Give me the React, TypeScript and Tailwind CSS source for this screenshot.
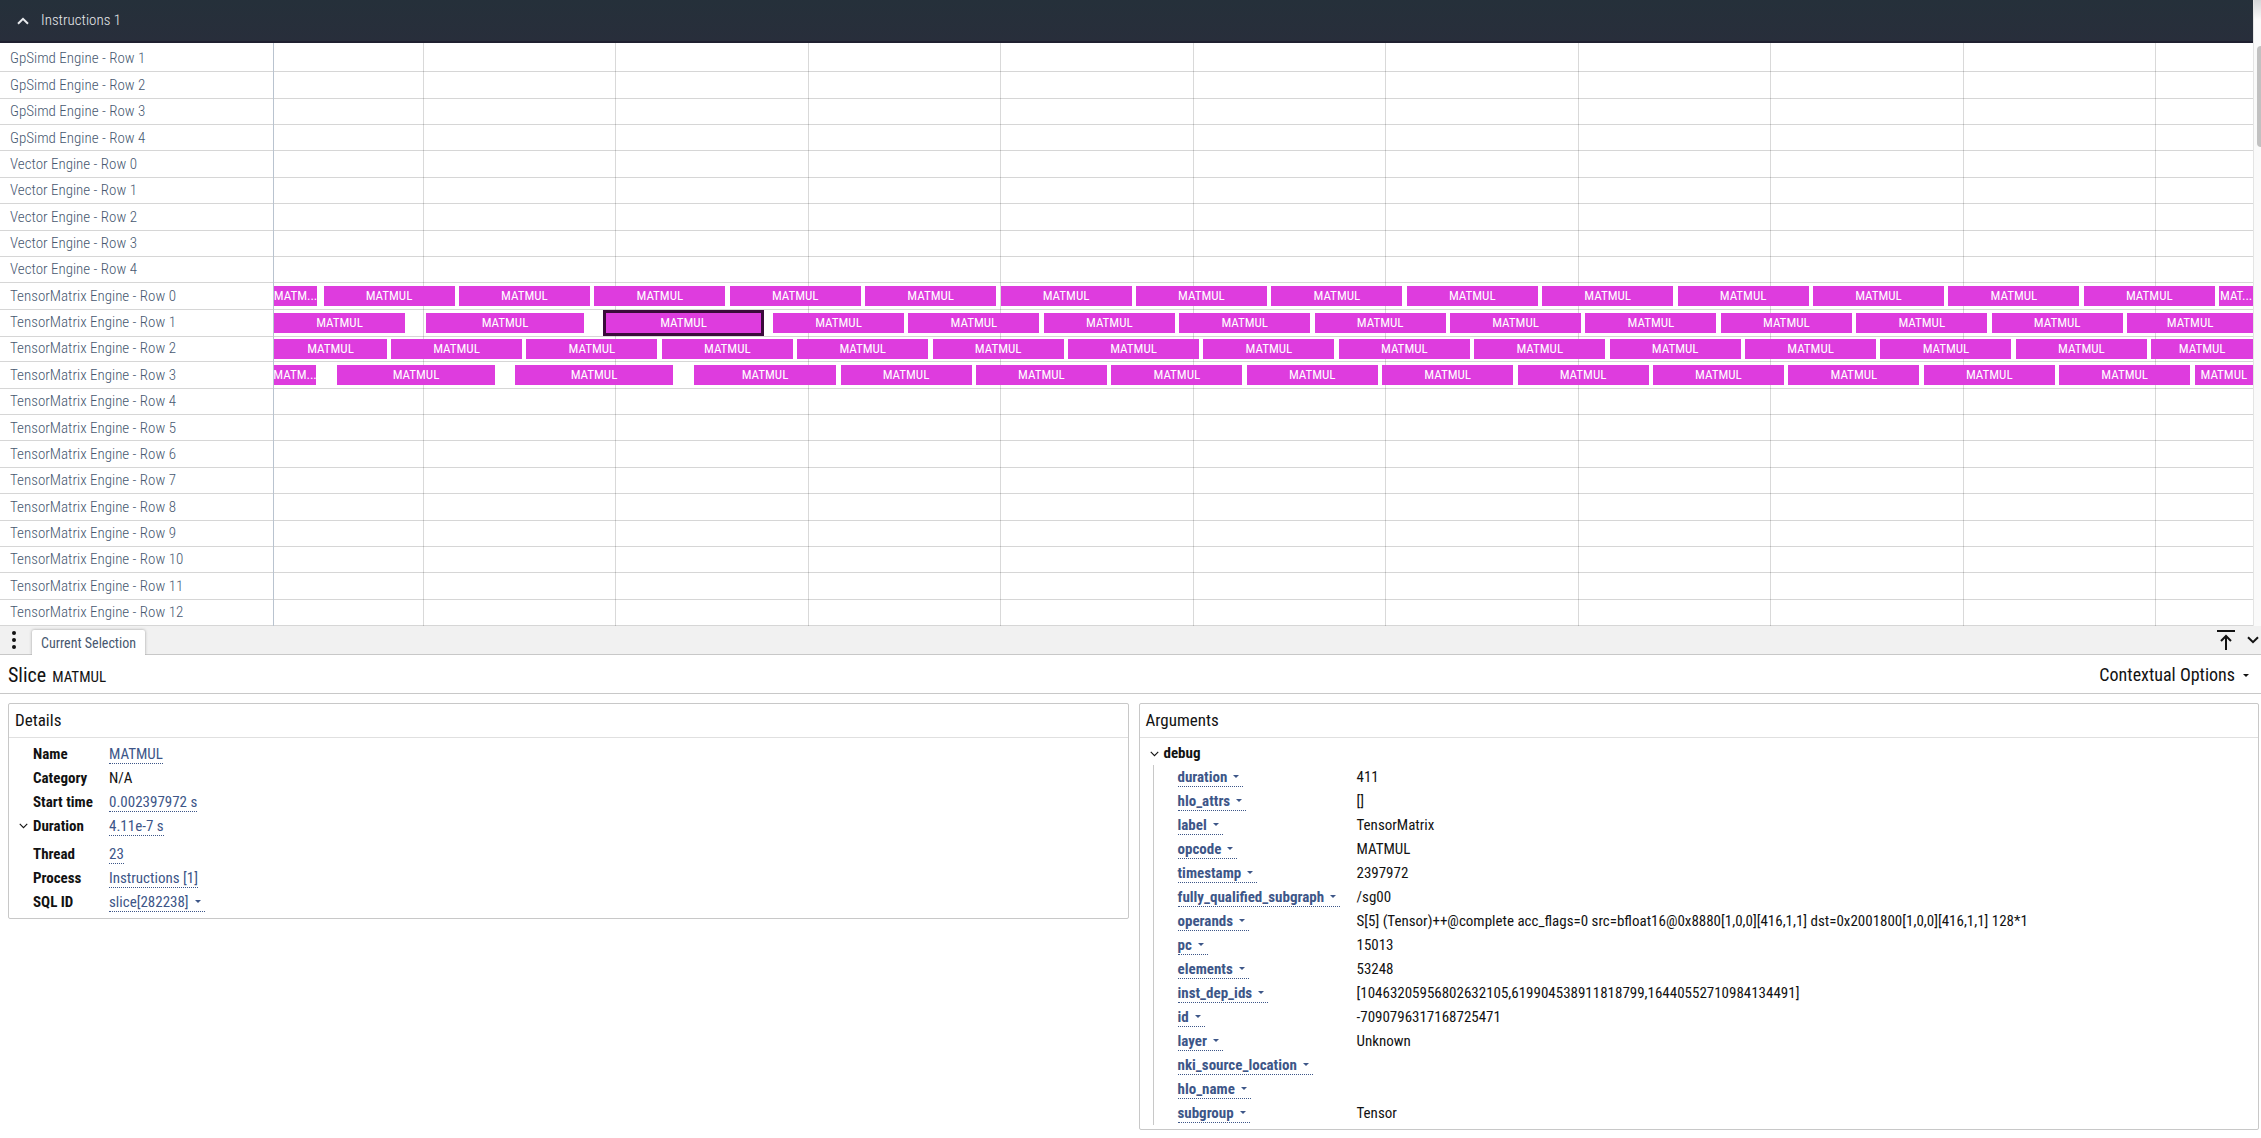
import clsx from "clsx";
import type { ReactNode } from "react";

type Slice = {
	start: number;
	end: number;
	label?: string;
	selected?: boolean;
};

type Track = {
	name: string;
	slices: Slice[];
};

type Argument = {
	name: string;
	value: string;
};

const TIMELINE_START = 274;
const TIMELINE_END = 2253;
const SLICE_INTERVAL = 135.4;
const SLICE_DURATION = 131;

const GRID_INTERVAL = 192.5;
const FIRST_GRID_LINE = 422.5;

const gridLines = [...Array(10)].map((_, index) => FIRST_GRID_LINE + index * GRID_INTERVAL);

const repeatSlices = (first: number): Slice[] => {
	const slices: Slice[] = [];

	for (let start = first; start < TIMELINE_END; start += SLICE_INTERVAL) {
		const end = Math.min(start + SLICE_DURATION, TIMELINE_END);

		slices.push({ start, end, label: end - start < 40 ? "MAT..." : "MATMUL" });
	}

	return slices;
};

const matmulSlices: Record<number, Slice[]> = {
	0: [{ start: 274, end: 317, label: "MATM..." }, ...repeatSlices(323.5)],
	1: [
		{ start: 274, end: 405 },
		{ start: 426, end: 584 },
		{ start: 603, end: 764, selected: true },
		...repeatSlices(773),
	],
	2: [{ start: 274, end: 387 }, ...repeatSlices(391)],
	3: [
		{ start: 274, end: 316, label: "MATM..." },
		{ start: 337, end: 495 },
		{ start: 515, end: 673 },
		{ start: 694, end: 836 },
		...repeatSlices(840.5),
	],
};

const tracks: Track[] = [
	...[1, 2, 3, 4].map((row) => ({ name: `GpSimd Engine - Row ${row}`, slices: [] })),
	...[0, 1, 2, 3, 4].map((row) => ({ name: `Vector Engine - Row ${row}`, slices: [] })),
	...[...Array(13)].map((_, row) => ({
		name: `TensorMatrix Engine - Row ${row}`,
		slices: matmulSlices[row] ?? [],
	})),
];

const debugArguments: Argument[] = [
	{ name: "duration", value: "411" },
	{ name: "hlo_attrs", value: "[]" },
	{ name: "label", value: "TensorMatrix" },
	{ name: "opcode", value: "MATMUL" },
	{ name: "timestamp", value: "2397972" },
	{ name: "fully_qualified_subgraph", value: "/sg00" },
	{
		name: "operands",
		value: "S[5] (Tensor)++@complete acc_flags=0 src=bfloat16@0x8880[1,0,0][416,1,1] dst=0x2001800[1,0,0][416,1,1] 128*1",
	},
	{ name: "pc", value: "15013" },
	{ name: "elements", value: "53248" },
	{ name: "inst_dep_ids", value: "[10463205956802632105,619904538911818799,16440552710984134491]" },
	{ name: "id", value: "-7090796317168725471" },
	{ name: "layer", value: "Unknown" },
	{ name: "nki_source_location", value: "" },
	{ name: "hlo_name", value: "" },
	{ name: "subgroup", value: "Tensor" },
];

const Chevron = ({ className }: { className?: string }) => (
	<svg viewBox="0 0 12 8" fill="none" stroke="currentColor" className={className}>
		<path d="M1 1.2 6 6.2l5-5" />
	</svg>
);

const Caret = () => (
	<svg viewBox="0 0 6 3" fill="currentColor" className="h-[3px] w-[6px]">
		<path d="M0 0h6L3 3z" />
	</svg>
);

const TrackSlices = ({ slices }: { slices: Slice[] }) => (
	<div className="relative z-10 flex h-full items-center">
		{slices.map((slice, index) => {
			const previousEnd = slices[index - 1]?.end ?? TIMELINE_START;

			return (
				<div key={slice.start} className="contents">
					<div className="basis-0" style={{ flexGrow: slice.start - previousEnd }} />
					<div
						className={clsx(
							"flex min-w-0 basis-0 items-center justify-center bg-[#de3cde] text-[13px] whitespace-nowrap text-white",
							slice.selected ? "h-[26px] ring-3 ring-[#3b0b3b] ring-inset" : "h-5"
						)}
						style={{ flexGrow: slice.end - slice.start }}
					>
						{slice.label ?? "MATMUL"}
					</div>
				</div>
			);
		})}
	</div>
);

const Section = ({ title, children }: { title: string; children: ReactNode }) => (
	<section className="rounded-xs border border-[#c8c8c8] pb-1">
		<h2 className="border-b border-[#e0e0e0] px-[6px] text-[17px] leading-[33px]">{title}</h2>
		{children}
	</section>
);

const Anchor = ({ children }: { children: ReactNode }) => (
	<a
		href="#"
		className="inline-block border-b border-dotted border-[#3d5688] leading-[18px] text-[#3d5688]"
	>
		{children}
	</a>
);

const MenuAnchor = ({ children }: { children: ReactNode }) => (
	<button
		type="button"
		className="inline-flex items-center gap-[6px] border-b border-dotted border-[#3d5688] pr-1 leading-[18px] text-[#3d5688]"
	>
		{children}
		<Caret />
	</button>
);

const DetailRow = ({
	name,
	expandable,
	children,
}: {
	name: string;
	expandable?: boolean;
	children: ReactNode;
}) => (
	<tr className="h-6">
		<th className="w-[100px] p-0 text-left font-bold">
			<span className="flex items-center">
				<span className="flex w-6 justify-end pr-[5px]">
					{expandable && <Chevron className="h-[6px] w-[9px] stroke-[1.5]" />}
				</span>
				{name}
			</span>
		</th>
		<td className="p-0">{children}</td>
	</tr>
);

const App = () => {
	return (
		<div className="min-h-screen w-full overflow-hidden bg-white font-['Roboto_Condensed',Roboto,sans-serif] text-[15px] text-[#121212]">
			<div className="flex">
				<div className="min-w-0 flex-1">
					<header className="border-b-2 border-[#1f2030] bg-[#282e3b]">
						<button
							type="button"
							className="flex h-[41px] w-full items-center gap-3 bg-linear-to-b from-[#25303a] to-[#282e3b] pl-[17px] text-left font-light text-[#e8eaed]"
						>
							<Chevron className="h-2 w-3 rotate-180 stroke-2" />
							Instructions 1
						</button>
					</header>

					<div className="relative pt-[3px]">
						<div className="pointer-events-none absolute inset-y-0 right-0 left-[273px] border-l border-[#b9c3cf]">
							{gridLines.map((line) => (
								<div
									key={line}
									className="absolute inset-y-0 w-px bg-black/15"
									style={{
										left: `${((line - TIMELINE_START) / (TIMELINE_END - TIMELINE_START)) * 100}%`,
									}}
								/>
							))}
						</div>

						<div className="grid h-[580px] auto-rows-fr">
							{tracks.map((track) => (
								<div key={track.name} className="grid min-h-0 grid-cols-[274px_1fr]">
									<div className="flex items-center border-b border-[#d6d6d6] pl-[10px] font-light text-[#475870]">
										{track.name}
									</div>
									<div className="min-w-0 border-b border-[#d6d6d6]">
										<TrackSlices slices={track.slices} />
									</div>
								</div>
							))}
						</div>
					</div>
				</div>

				<div className="w-2 border-l border-[#e4e4e4] bg-linear-to-b from-[#d5d7d9] to-[#fafafa] to-[20px] pt-[46px] pl-[3px]">
					<div className="h-[101px] rounded-l-sm bg-[#c1c1c1]" />
				</div>
			</div>

			<div className="flex h-[29px] items-end justify-between border-b border-[#c8c8c8] bg-[#f1f1f1]">
				<div className="flex items-end">
					<button type="button" aria-label="Tab menu" className="flex h-7 w-8 items-center justify-center pr-1">
						<svg viewBox="0 0 4 18" fill="currentColor" className="h-[18px] w-1">
							<circle cx="2" cy="2" r="2" />
							<circle cx="2" cy="9" r="2" />
							<circle cx="2" cy="16" r="2" />
						</svg>
					</button>
					<button
						type="button"
						className="-mb-px h-[25px] rounded-t-xs bg-white px-[9px] text-sm text-[#475870] shadow-[0_0_3px_#999] [clip-path:inset(-4px_-4px_0_-4px)]"
					>
						Current Selection
					</button>
				</div>
				<div className="flex h-full items-center gap-3 pr-[2px]">
					<button type="button" aria-label="Maximize panel">
						<svg viewBox="0 0 18 20" fill="none" stroke="currentColor" strokeWidth="2" className="h-5 w-[18px]">
							<path d="M0 1h18M9 20V6M4 11l5-5 5 5" />
						</svg>
					</button>
					<button type="button" aria-label="Collapse panel">
						<Chevron className="h-2 w-3 stroke-2" />
					</button>
				</div>
			</div>

			<div className="flex h-[39px] items-center justify-between border-b border-[#c8c8c8] pt-[2px] pr-3 pl-2">
				<h1 className="flex items-baseline gap-[6px] text-xl">
					Slice
					<span className="text-[15px]">MATMUL</span>
				</h1>
				<button type="button" className="flex items-center gap-2 text-lg">
					Contextual Options
					<Caret />
				</button>
			</div>

			<div className="grid grid-cols-2 items-start gap-[10px] pt-[9px] pr-[2px] pl-2">
				<Section title="Details">
					<table className="mt-1 w-full border-collapse">
						<tbody>
							<DetailRow name="Name">
								<Anchor>MATMUL</Anchor>
							</DetailRow>
							<DetailRow name="Category">N/A</DetailRow>
							<DetailRow name="Start time">
								<Anchor>0.002397972 s</Anchor>
							</DetailRow>
							<DetailRow name="Duration" expandable>
								<Anchor>4.11e-7 s</Anchor>
							</DetailRow>
							<tr className="h-1" />
							<DetailRow name="Thread">
								<Anchor>23</Anchor>
							</DetailRow>
							<DetailRow name="Process">
								<Anchor>Instructions [1]</Anchor>
							</DetailRow>
							<DetailRow name="SQL ID">
								<MenuAnchor>slice[282238]</MenuAnchor>
							</DetailRow>
						</tbody>
					</table>
				</Section>

				<Section title="Arguments">
					<button type="button" className="mt-1 flex h-[23px] items-center gap-[5px] pl-[10px] font-bold">
						<Chevron className="h-[6px] w-[9px] stroke-[1.5]" />
						debug
					</button>
					<div className="ml-[13px] border-l border-[#c8c8c8] pl-6">
						<table className="w-full border-collapse">
							<tbody>
								{debugArguments.map((argument) => (
									<tr key={argument.name} className="h-6">
										<th className="w-[179px] p-0 text-left font-bold">
											<MenuAnchor>{argument.name}</MenuAnchor>
										</th>
										<td className="p-0">{argument.value}</td>
									</tr>
								))}
							</tbody>
						</table>
					</div>
				</Section>
			</div>
		</div>
	);
};

export default App;
